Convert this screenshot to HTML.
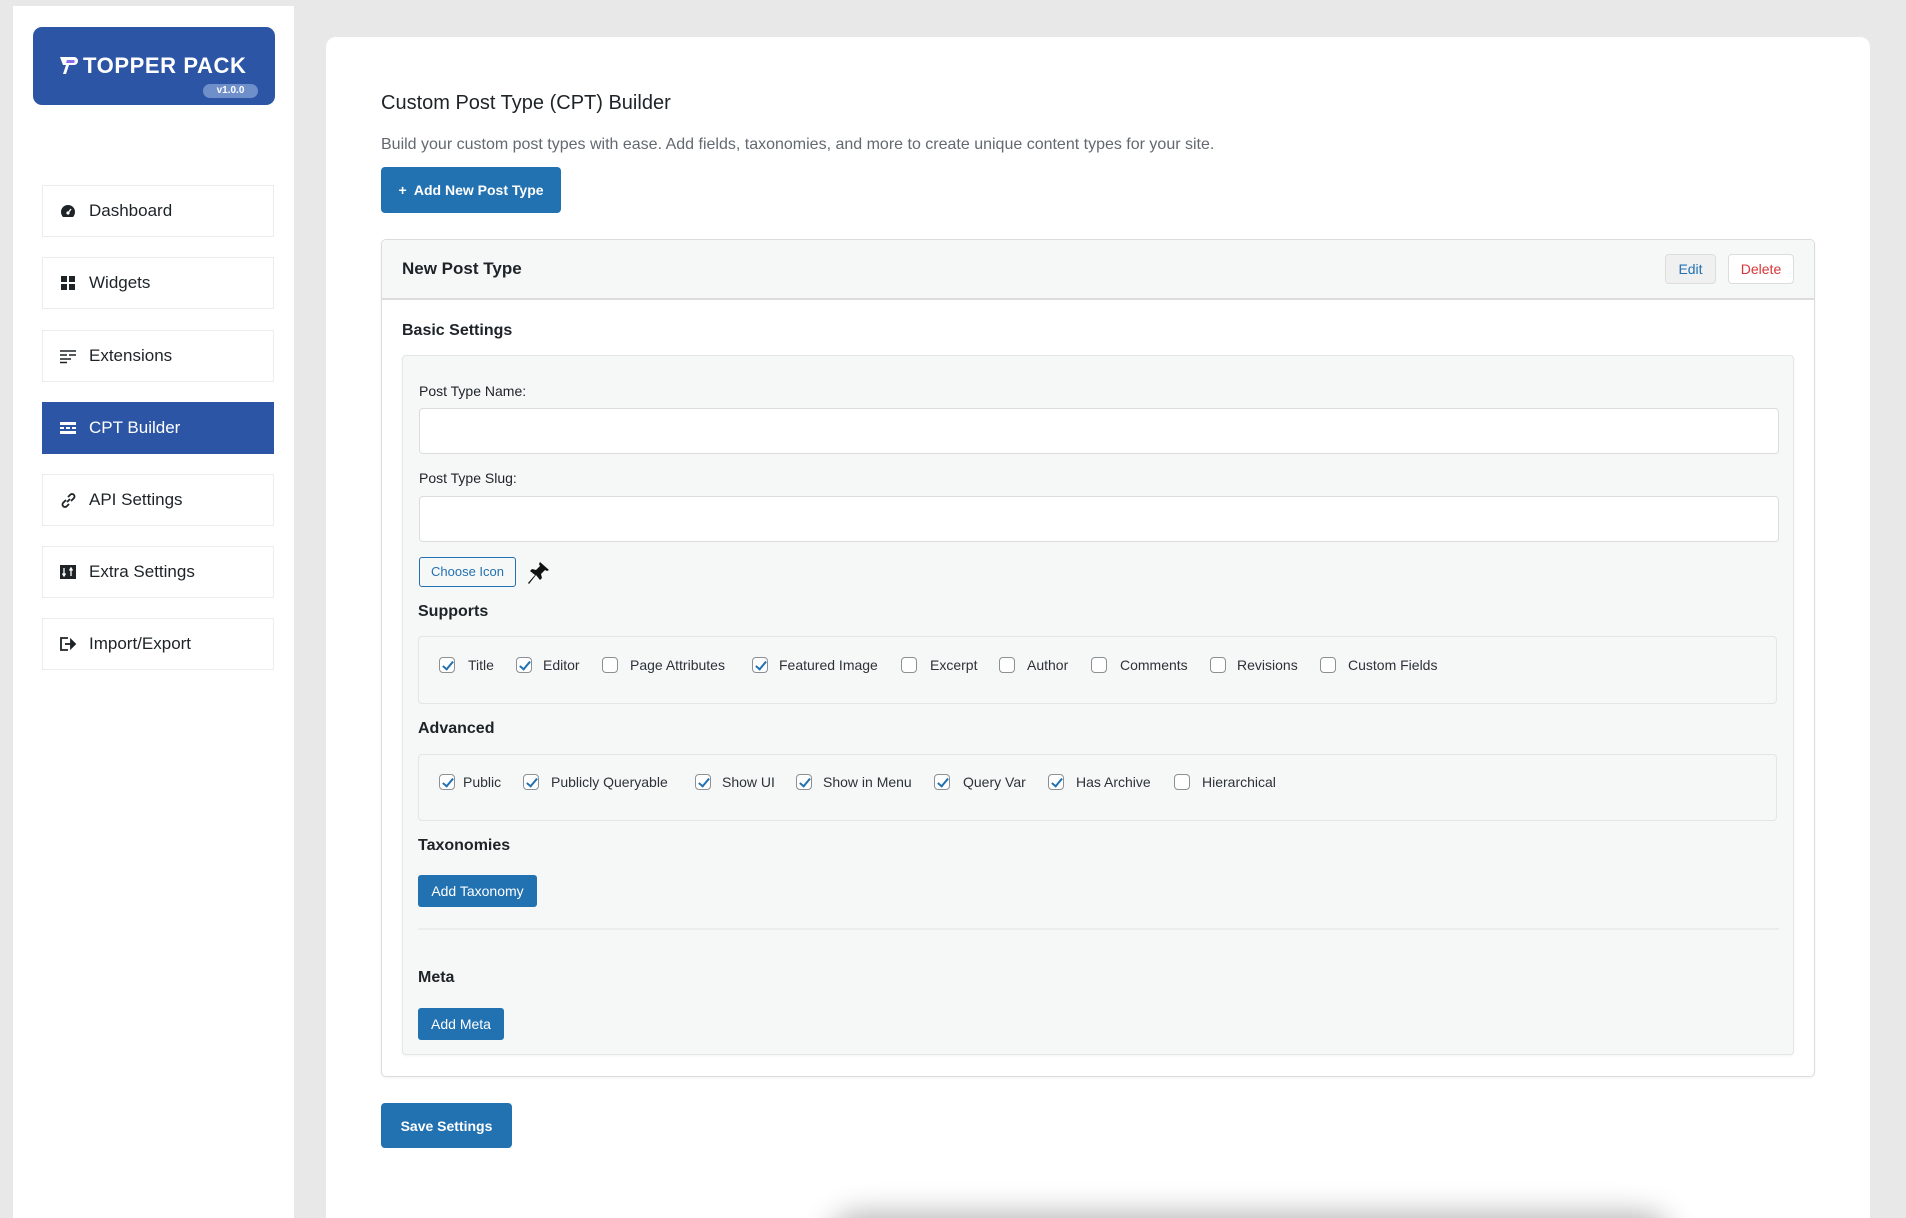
<!DOCTYPE html>
<html><head><meta charset="utf-8"><style>
*{box-sizing:border-box;margin:0;padding:0}
html,body{width:1906px;height:1218px;overflow:hidden}
body{background:#e8e8e8;font-family:"Liberation Sans",Arial,sans-serif;position:relative;color:#1d2327}
.abs{position:absolute}
#side{left:13px;top:6px;width:281px;height:1212px;background:#fff}
#logo{left:33px;top:27px;width:242px;height:78px;background:#2d55a5;border-radius:9px}
.nav{position:absolute;left:42px;width:232px;height:52px;background:#fff;border:1px solid #ececec;font-size:17px;display:flex;align-items:center;color:#1d2327}
.nav svg{position:absolute;left:17px;top:17px}
.nav span{position:absolute;left:46px}
.nav.act{background:#2d55a5;color:#fff;border-color:#2d55a5}
#card{left:326px;top:37px;width:1544px;height:1181px;background:#fff;border-radius:10px 10px 0 0}
.btn{position:absolute;background:#2271b1;color:#fff;border-radius:3px;font-size:14px;font-weight:bold;display:flex;align-items:center;justify-content:center}
.h{position:absolute;font-size:16px;font-weight:bold;color:#1d2327}
.cb{position:absolute;width:16px;height:16px;border:1px solid #8c8f94;border-radius:4px;background:#fff}
.cb.on::after{content:"";position:absolute;left:5px;top:1px;width:4px;height:9px;border:solid #2271b1;border-width:0 2px 2px 0;transform:rotate(40deg)}
.lb{position:absolute;font-size:14px;color:#2c3338}
.inp{position:absolute;left:419px;width:1360px;height:46px;background:#fff;border:1px solid #dcdcde;border-radius:4px}
.box{position:absolute;left:418px;width:1359px;background:#f6f7f7;border:1px solid #e5e5e5;border-radius:4px}
</style></head><body>
<div class="abs" id="side"></div>
<div class="abs" id="logo">
 <svg class="abs" style="left:26px;top:27px" width="20" height="22" viewBox="0 0 20 22"><path d="M1 3h14a4 4 0 0 1 0 8h-5l-3 9H4l3-9H4z" fill="#fff"/><path d="M8 6h7a2 2 0 0 1 0 3H7z" fill="#8a6cf0"/></svg>
 <div class="abs" style="left:50px;top:26px;color:#fff;font-size:22px;font-weight:bold;letter-spacing:0.6px">TOPPER PACK</div>
 <div class="abs" style="left:170px;top:57px;width:55px;height:14px;background:#6f8fca;border-radius:7px;color:#fff;font-size:10px;font-weight:bold;text-align:center;line-height:14px">v1.0.0</div>
</div>
<div class="nav" style="top:185px"><svg width="16" height="16" viewBox="0 0 16 16"><path d="M8 2a7 7 0 0 0-7 7c0 2 1 4 2 5h10c1-1 2-3 2-5a7 7 0 0 0-7-7z" fill="#1d2327"/><circle cx="8" cy="10" r="1.6" fill="#fff"/><path d="M8 10l3-4" stroke="#fff" stroke-width="1.3"/></svg><span>Dashboard</span></div>
<div class="nav" style="top:257px"><svg width="16" height="16" viewBox="0 0 16 16"><rect x="1" y="1" width="6" height="6" fill="#1d2327"/><rect x="9" y="1" width="6" height="6" fill="#1d2327"/><rect x="1" y="9" width="6" height="6" fill="#1d2327"/><rect x="9" y="9" width="6" height="6" fill="#1d2327"/></svg><span>Widgets</span></div>
<div class="nav" style="top:330px"><svg width="16" height="16" viewBox="0 0 16 16" stroke="#1d2327" stroke-width="1.5"><path d="M0 3h16M0 7h7M9 7h7M0 11h11M0 14.5h7"/></svg><span>Extensions</span></div>
<div class="nav act" style="top:402px"><svg width="16" height="16" viewBox="0 0 16 16" fill="#fff"><rect x="0" y="2" width="16" height="3"/><rect x="0" y="7" width="4" height="2"/><rect x="6" y="7" width="4" height="2"/><rect x="12" y="7" width="4" height="2"/><rect x="0" y="11" width="16" height="3"/></svg><span>CPT Builder</span></div>
<div class="nav" style="top:474px"><svg width="17" height="17" viewBox="0 0 17 17" fill="none" stroke="#1d2327" stroke-width="1.8"><path d="M7 10l3-3M6 8l-3 3a2.5 2.5 0 0 0 3.5 3.5L9 12M11 9l3-3A2.5 2.5 0 0 0 10.5 2.5L8 5"/></svg><span>API Settings</span></div>
<div class="nav" style="top:546px"><svg width="16" height="16" viewBox="0 0 16 16"><rect x="0" y="1" width="16" height="14" fill="#1d2327"/><path d="M4 4v8M2.5 9.5L4 12l1.5-2.5M11 12V4M9.5 6.5L11 4l1.5 2.5" stroke="#fff" stroke-width="1.3" fill="none"/></svg><span>Extra Settings</span></div>
<div class="nav" style="top:618px"><svg width="17" height="16" viewBox="0 0 17 16" fill="none" stroke="#1d2327" stroke-width="1.8"><path d="M8 2H1v12h7"/><path d="M5 8h8" /><path d="M11 4l4 4-4 4z" fill="#1d2327"/></svg><span>Import/Export</span></div>

<div class="abs" id="card"></div>
<div class="abs" style="left:381px;top:92px;font-size:20px;color:#1d2327">Custom Post Type (CPT) Builder</div>
<div class="abs" style="left:381px;top:136px;font-size:16px;color:#646970">Build your custom post types with ease. Add fields, taxonomies, and more to create unique content types for your site.</div>
<div class="btn" style="left:381px;top:167px;width:180px;height:46px;border-radius:4px">+&nbsp; Add New Post Type</div>

<div class="abs" style="left:381px;top:239px;width:1434px;height:838px;border:1px solid #dcdcde;border-radius:5px;background:#fff;box-shadow:0 1px 2px rgba(0,0,0,0.06)"></div>
<div class="abs" style="left:382px;top:240px;width:1432px;height:60px;background:#f6f7f7;border-bottom:2px solid #dcdcde;border-radius:5px 5px 0 0"></div>
<div class="h" style="left:402px;top:259px;font-size:17px">New Post Type</div>
<div class="abs" style="left:1665px;top:254px;width:51px;height:30px;background:#f0f0f1;border:1px solid #dcdcde;border-radius:4px;color:#2271b1;font-size:14px;text-align:center;line-height:28px">Edit</div>
<div class="abs" style="left:1728px;top:254px;width:66px;height:30px;background:#fff;border:1px solid #dcdcde;border-radius:4px;color:#d63638;font-size:14px;text-align:center;line-height:28px">Delete</div>

<div class="h" style="left:402px;top:322px">Basic Settings</div>
<div class="box" style="left:402px;top:355px;width:1392px;height:700px;box-shadow:0 1px 2px rgba(0,0,0,0.05)"></div>
<div class="lb" style="left:419px;top:383px;font-size:14px;color:#1d2327">Post Type Name:</div>
<div class="inp" style="top:408px"></div>
<div class="lb" style="left:419px;top:470px;font-size:14px;color:#1d2327">Post Type Slug:</div>
<div class="inp" style="top:496px"></div>
<div class="abs" style="left:419px;top:557px;width:97px;height:30px;border:1px solid #2271b1;border-radius:3px;background:#f6f7f7;color:#2271b1;font-size:13px;text-align:center;line-height:28px">Choose Icon</div>
<svg class="abs" style="left:527px;top:561px" width="23" height="24" viewBox="0 0 23 24"><path d="M13 1l9 8-2 1-2-1-4 4 1 4-2 2-4-5-7 9-1-1 7-8-5-4 2-2 4 1 4-4-1-2z" fill="#111"/></svg>

<div class="h" style="left:418px;top:603px">Supports</div>
<div class="box" style="top:636px;height:68px;background:#f6f7f7"></div>
<div class="cb on" style="left:439px;top:657px"></div><div class="lb" style="left:468px;top:657px">Title</div>
<div class="cb on" style="left:516px;top:657px"></div><div class="lb" style="left:543px;top:657px">Editor</div>
<div class="cb" style="left:602px;top:657px"></div><div class="lb" style="left:630px;top:657px">Page Attributes</div>
<div class="cb on" style="left:752px;top:657px"></div><div class="lb" style="left:779px;top:657px">Featured Image</div>
<div class="cb" style="left:901px;top:657px"></div><div class="lb" style="left:930px;top:657px">Excerpt</div>
<div class="cb" style="left:999px;top:657px"></div><div class="lb" style="left:1027px;top:657px">Author</div>
<div class="cb" style="left:1091px;top:657px"></div><div class="lb" style="left:1120px;top:657px">Comments</div>
<div class="cb" style="left:1210px;top:657px"></div><div class="lb" style="left:1237px;top:657px">Revisions</div>
<div class="cb" style="left:1320px;top:657px"></div><div class="lb" style="left:1348px;top:657px">Custom Fields</div>

<div class="h" style="left:418px;top:720px">Advanced</div>
<div class="box" style="top:754px;height:67px"></div>
<div class="cb on" style="left:439px;top:774px"></div><div class="lb" style="left:463px;top:774px">Public</div>
<div class="cb on" style="left:523px;top:774px"></div><div class="lb" style="left:551px;top:774px">Publicly Queryable</div>
<div class="cb on" style="left:695px;top:774px"></div><div class="lb" style="left:722px;top:774px">Show UI</div>
<div class="cb on" style="left:796px;top:774px"></div><div class="lb" style="left:823px;top:774px">Show in Menu</div>
<div class="cb on" style="left:934px;top:774px"></div><div class="lb" style="left:963px;top:774px">Query Var</div>
<div class="cb on" style="left:1048px;top:774px"></div><div class="lb" style="left:1076px;top:774px">Has Archive</div>
<div class="cb" style="left:1174px;top:774px"></div><div class="lb" style="left:1202px;top:774px">Hierarchical</div>

<div class="h" style="left:418px;top:837px">Taxonomies</div>
<div class="btn" style="left:418px;top:875px;width:119px;height:32px;font-weight:normal;font-size:14px">Add Taxonomy</div>
<div class="abs" style="left:418px;top:928px;width:1361px;height:2px;background:#ececec"></div>
<div class="h" style="left:418px;top:969px">Meta</div>
<div class="btn" style="left:418px;top:1008px;width:86px;height:32px;font-weight:normal;font-size:14px">Add Meta</div>

<div class="btn" style="left:381px;top:1103px;width:131px;height:45px;border-radius:4px">Save Settings</div>
<div class="abs" style="left:840px;top:1226px;width:820px;height:40px;background:#888;box-shadow:0 0 30px 12px rgba(0,0,0,0.3);border-radius:20px"></div>
</body></html>
